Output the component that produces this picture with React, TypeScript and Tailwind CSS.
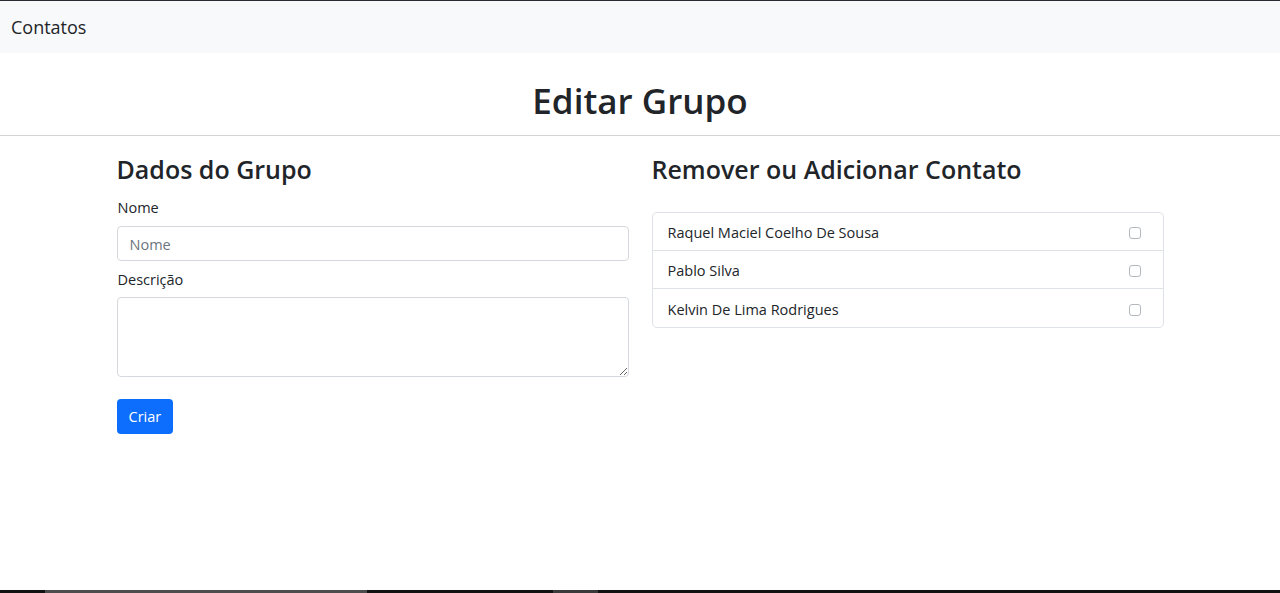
const contatos = [
  "Raquel Maciel Coelho De Sousa",
  "Pablo Silva",
  "Kelvin De Lima Rodrigues",
];

export default function App() {
  return (
    <div className="min-h-[593px] flex flex-col bg-white text-[#212529] font-['Open_Sans',sans-serif]">
      <div className="h-px bg-[#2a2a33]" />

      {/* Navbar */}
      <nav className="h-[52px] bg-[#f8f9fa] flex items-center px-[11px]">
        <span className="text-[18px] leading-none">Contatos</span>
      </nav>

      <h1 className="mt-[26px] mb-[12px] text-center text-[35px] leading-[44px] font-semibold">
        Editar Grupo
      </h1>
      <hr className="border-0 h-px bg-[#d4d4d4]" />

      <main className="w-[1047px] mx-auto grid grid-cols-2 gap-[23px] pt-[16px]">
        {/* Dados do grupo */}
        <section className="flex flex-col">
          <h3 className="text-[25px] leading-[34px] font-semibold">Dados do Grupo</h3>
          <label className="mt-[10px] text-[14.5px] leading-[24px] pl-px">Nome</label>
          <input
            placeholder="Nome"
            className="mt-[6px] h-[35px] border border-[#d5d9dd] rounded-[4px] px-[12px] pt-[2px] text-[14.5px] placeholder:text-[#6c757d] outline-none"
          />
          <label className="mt-[7px] text-[14.5px] leading-[24px] pl-px">Descrição</label>
          <textarea className="mt-[5px] h-[80px] border border-[#d5d9dd] rounded-[4px] px-[12px] py-[6px] text-[14.5px] outline-none" />
          <div className="mt-[22px]">
            <button className="h-[35px] px-[12px] pt-[1px] rounded-[4px] bg-[#0d6efd] text-white text-[14.5px]">
              Criar
            </button>
          </div>
        </section>

        {/* Contatos */}
        <section className="flex flex-col">
          <h3 className="text-[25px] leading-[34px] font-semibold">Remover ou Adicionar Contato</h3>
          <ul className="mt-[26px] border border-[#dee2e6] rounded-[5px]">
            {contatos.map((nome, i) => (
              <li
                key={nome}
                className={
                  "h-[38px] flex items-center justify-between pl-[15px] pr-[22px] pt-[3px] text-[14.5px] " +
                  (i < contatos.length - 1 ? "border-b border-[#dee2e6]" : "")
                }
              >
                <span>{nome}</span>
                <span className="w-[12px] h-[12px] border border-[#b3b8bd] rounded-[3px] bg-white" />
              </li>
            ))}
          </ul>
        </section>
      </main>

      {/* barra inferior */}
      <div className="mt-auto h-[3px] bg-[#121212] flex">
        <div className="ml-[45px] w-[322px] bg-[#4d4d4d]" />
        <div className="ml-[186px] w-[45px] bg-[#3a3a3a]" />
      </div>
    </div>
  );
}
